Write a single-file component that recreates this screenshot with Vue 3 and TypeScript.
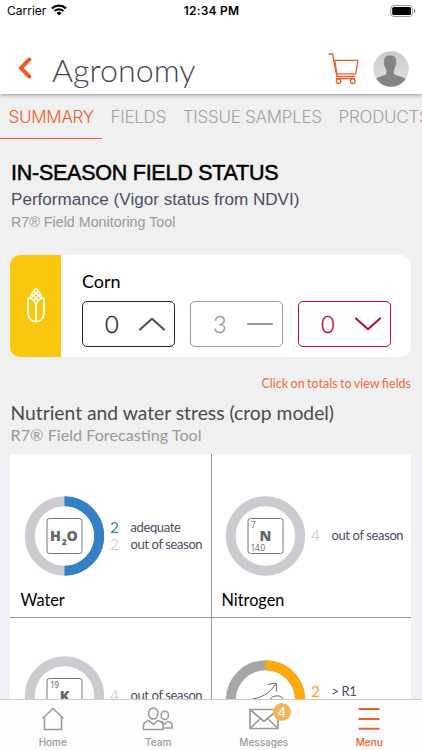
<script setup lang="ts">
interface Tab { label: string; active?: boolean }
interface Legend { count: number; label: string; color: string; light?: boolean }
interface Cell {
  id: string
  name: string
  ring: string
  half?: string
  legend: Legend[]
  symbol?: string
  num?: string
  mass?: string
}

const tabs: Tab[] = [
  { label: 'SUMMARY', active: true },
  { label: 'FIELDS' },
  { label: 'TISSUE SAMPLES' },
  { label: 'PRODUCTS' },
]

const totals = [
  { value: 0, kind: 'up', points: '2,13.5 14,2.8 26,13.5' },
  { value: 3, kind: 'flat', points: '2,8 26,8' },
  { value: 0, kind: 'down', points: '2,2.5 14,13.2 26,2.5' },
]

const cells: Cell[] = [
  {
    id: 'water', name: 'Water', ring: '#cbccd1', half: '#3380c7',
    legend: [
      { count: 2, label: 'adequate', color: '#3380c7' },
      { count: 2, label: 'out of season', color: '#bcbdc2', light: true },
    ],
  },
  {
    id: 'nitrogen', name: 'Nitrogen', ring: '#cbccd1', symbol: 'N', num: '7', mass: '14.0',
    legend: [{ count: 4, label: 'out of season', color: '#b6b7bc', light: true }],
  },
  {
    id: 'potassium', name: 'Potassium', ring: '#cbccd1', symbol: 'K', num: '19', mass: '39.1',
    legend: [{ count: 4, label: 'out of season', color: '#b6b7bc', light: true }],
  },
  {
    id: 'growth', name: 'Growth Stage', ring: '#a6a6a6', half: '#ffa90a',
    legend: [
      { count: 2, label: '> R1', color: '#f5a21b' },
      { count: 2, label: 'out of season', color: '#a6a6a6', light: true },
    ],
  },
]
</script>

<template>
  <div class="screen">
    <header class="header">
      <div class="status">
        <div class="carrier">
          <span>Carrier</span>
          <svg class="wifi" width="16" height="12" viewBox="0 0 16 12" fill="none" stroke="#000">
            <path d="M1 4.4a10.2 10.2 0 0 1 14 0" stroke-width="2.3" />
            <path d="M3.500 7.100a6.600 6.600 0 0 1 9 0" stroke-width="2.100" />
            <path d="M8 11.500 5.500 9a3.600 3.600 0 0 1 5 0z" fill="#000" stroke="none" />
          </svg>
        </div>
        <span class="clock">12:34 PM</span>
        <svg class="battery" width="26" height="12" viewBox="0 0 26 12">
          <rect x="0.8" y="0.6" width="21.600" height="10.800" rx="3" fill="#fff" stroke="#8e8e8e" />
          <rect x="2.200" y="2" width="18.800" height="8" rx="1.600" fill="#000" />
          <path d="M24 4v4c1-.4 1.400-1.200 1.400-2S25 4.400 24 4z" fill="#777" />
        </svg>
      </div>
      <div class="titlebar">
        <svg class="back" width="14" height="22" viewBox="0 0 14 22" fill="none" stroke="#ef5b2b" stroke-width="4">
          <path d="M11.300 2.500 3 11l8.300 8.500" stroke-linecap="round" />
        </svg>
        <h1>Agronomy</h1>
        <svg class="cart" width="32" height="32" viewBox="0 0 32 32" fill="none" stroke="#ee5c30" stroke-width="1.300">
          <path d="M.5 1h4l4.300 22.300H27M5.600 7.300H30L27.600 20.800H8.300M8 25.500h19" />
          <path d="M6.800 7.600 9 22" />
          <circle cx="10.600" cy="28.200" r="2.300" /><circle cx="24.800" cy="28.200" r="2.300" />
        </svg>
        <svg class="avatar" width="36" height="36" viewBox="0 0 36 36">
          <defs>
            <clipPath id="face"><circle cx="18" cy="18" r="17.800" /></clipPath>
            <linearGradient id="shade" x1="0" y1="0" x2="0" y2="1"><stop offset="0" stop-color="#c8c8c8" /><stop offset="1" stop-color="#e4e4e4" /></linearGradient>
          </defs>
          <g clip-path="url(#face)">
            <path d="M0 0h36v36H0z" fill="url(#shade)" />
            <path d="M0 33c2-7.500 7-6.500 13.500-10v-4c-1-1-1.500-2.500-1.700-4-1.300-1-1.300-3.300-.5-4-.8-4.500 1.700-6.500 5.900-6.500 4.300 0 6.500 2.300 5.800 6.500.8.700.5 3-.6 3.800-.2 1.500-.6 3.100-1.500 4.200v4C27 26.500 33.500 25 36 33v4H0z" fill="#848484" />
          </g>
        </svg>
      </div>
    </header>

    <nav class="tabs">
      <a v-for="t in tabs" :key="t.label" :class="{ active: t.active }">{{ t.label }}</a>
    </nav>

    <main>
      <section class="intro">
        <h2>IN-SEASON FIELD STATUS</h2>
        <p class="perf">Performance (Vigor status from NDVI)</p>
        <p class="tool">R7® Field Monitoring Tool</p>
      </section>

      <section class="crop">
        <div class="crop-icon">
          <svg width="20" height="36" viewBox="0 0 20 36" fill="none" stroke="#fff" stroke-width="1.700" stroke-linejoin="round">
            <path d="M2 10v15c0 5 3.500 8.700 8 8.700s8-3.700 8-8.700V10c-5 .5-8 4-8 9v14.500M2 10c5 .5 8 4 8 9" />
            <path d="M5 11C4 9 5 7 6.200 6.500 6 4.500 7 3.500 8.200 3.500 8.300 1.500 9 1 10 1s1.700.5 1.800 2.500c1.200 0 2.200 1 2 3C15 7 16 9 15 11" />
            <path d="M8.200 3.500 14 9M11.800 3.500 6 9M6.200 6.500l6 6M13.800 6.500l-6 6" stroke-width="1.300" />
          </svg>
        </div>
        <div class="crop-body">
          <h3>Corn</h3>
          <div class="totals">
            <button v-for="t in totals" :key="t.kind" :class="['total', t.kind]">
              <span>{{ t.value }}</span>
              <svg width="28" height="16" viewBox="0 0 28 16" fill="none" stroke-width="2.200" stroke-linecap="round" stroke-linejoin="round"><polyline :points="t.points" /></svg>
            </button>
          </div>
        </div>
      </section>

      <p class="hint">Click on totals to view fields</p>
      <section class="model">
        <h2>Nutrient and water stress (crop model)</h2>
        <p>R7® Field Forecasting Tool</p>
      </section>

      <section class="grid">
        <article v-for="c in cells" :key="c.id" :class="['cell', c.id]">
          <div class="reading">
            <svg class="ring" width="80" height="80" viewBox="0 0 80 80">
              <circle cx="40.500" cy="40" r="34.700" fill="none" :stroke="c.ring" stroke-width="10" />
              <path v-if="c.half" d="M40.500 5.300a34.700 34.700 0 0 1 0 69.400" fill="none" :stroke="c.half" stroke-width="10" />
              <rect v-if="c.id !== 'growth'" x="23" y="22.500" width="35" height="35" rx="2.500" fill="#fff" stroke="#777" />
              <g v-if="c.symbol" fill="#666">
                <text x="26" y="31.500" class="tiny">{{ c.num }}</text>
                <text x="40.500" y="44.500" class="symbol" text-anchor="middle">{{ c.symbol }}</text>
                <text x="25.500" y="55" class="tiny">{{ c.mass }}</text>
              </g>
              <g v-if="c.id === 'water'" fill="#666">
                <text x="26" y="44.500" class="symbol">H</text>
                <text x="37.800" y="48.500" class="sub">2</text>
                <text x="42.500" y="44.500" class="symbol">O</text>
              </g>
              <g v-if="c.id === 'growth'" fill="none" stroke="#555" stroke-width=".9">
                <path d="M23 39.800c13-1 22-7 27.500-15.500M42.500 24.500l8.700-1.500.5 8.500" />
                <path d="M45.500 39c1-3 9-5 12.500-.500.500 1 .3 1.500 0 2.500M47 41c3-1.500 6-2 8-1" />
              </g>
            </svg>
            <ul>
              <li v-for="l in c.legend" :key="l.label">
                <b :class="{ light: l.light }" :style="{ color: l.color }">{{ l.count }}</b><span>{{ l.label }}</span>
              </li>
            </ul>
          </div>
          <h4>{{ c.name }}</h4>
        </article>
      </section>
    </main>

    <footer class="bar">
      <a>
        <svg width="24" height="24" viewBox="0 0 24 24" fill="none" stroke="#9a9a9a" stroke-width="1.500"><path d="M1.500 11.500 12 1.500l10.500 10M3.500 10v12.500h17V10" /></svg>
        <span>Home</span>
      </a>
      <a>
        <svg width="32" height="24" viewBox="0 0 32 24" fill="none" stroke="#9a9a9a" stroke-width="1.500">
          <ellipse cx="11.300" cy="6.500" rx="4.700" ry="5.500" />
          <path d="M1.500 22.500v-4c0-2.500 2-4 5.500-5l4.300 4 4.300-4c3.500 1 5.500 2.500 5.500 5v4z" />
          <ellipse cx="22.800" cy="8.300" rx="3.700" ry="4.300" />
          <path d="M19 15.300l1-.8 2.800 2.700 3-2.700c3 .8 4.500 2 4.500 4v2.500H22" />
        </svg>
        <span>Team</span>
      </a>
      <a>
        <svg width="32" height="24" viewBox="0 0 32 24" fill="none" stroke="#9a9a9a" stroke-width="1.700"><path d="M2 2.500h28v19H2zM2 2.500l14 12 14-12M2 21.500l10.500-10M30 21.500l-10.500-10" /></svg>
        <i class="badge">4</i>
        <span>Messages</span>
      </a>
      <a class="on">
        <svg width="24" height="24" viewBox="0 0 24 24" stroke="#ee5c30" stroke-width="2"><path d="M1.500 2h21M1.500 12h21M1.500 21.700h21" /></svg>
        <span>Menu</span>
      </a>
    </footer>
  </div>
</template>

<style>
body { background: #f1f0f7; overflow: hidden; }
</style>

<style scoped>
* { box-sizing: border-box; margin: 0; padding: 0; }
.screen { width: 422px; height: 750px; display: flex; flex-direction: column; overflow: hidden; background: #f1f0f7; font-family: Lato, sans-serif; color: #000; }
.screen svg { display: block; flex: none; }
.header { height: 94px; flex: none; background: #fff; box-shadow: 0 1px 4px rgba(0, 0, 0, .4); z-index: 1; }
.status { height: 22px; padding: 0 6px 0 7px; display: grid; grid-template-columns: 1fr auto 1fr; align-items: center; font: 12px/22px Inter, sans-serif; }
.carrier { display: flex; align-items: center; gap: 5px; }
.wifi { margin-top: -2px; }
.clock { font-weight: 600; font-size: 12px; letter-spacing: .2px; }
.battery { justify-self: end; margin-top: -1px; }
.titlebar { height: 72px; display: flex; align-items: center; padding: 0 13px 0 18px; }
.titlebar .back { margin-top: 20px; }
h1 { font-weight: 300; font-size: 32.200px; line-height: 40px; color: #44455a; margin: 23px 0 0 20px; flex: 1; }
.titlebar .cart { margin-top: 21px; }
.titlebar .avatar { margin: 21px 0 0 13px; }

.tabs { height: 45px; flex: none; display: flex; background: #f0f0f0; font: 300 17px/46px Inter, sans-serif; letter-spacing: -.27px; color: #a2a2a2; white-space: nowrap; }
.tabs a { height: 45px; padding: 0 8.200px 0 8.600px; flex: none; }
.tabs .active { color: #ee5c30; border-bottom: 1px solid #ee5c30; }

main { flex: 1; min-height: 0; overflow: hidden; background: linear-gradient(#f0f0f0 315px, #f1f0f7 315px); }
.intro { padding: 21px 11px 0; font-family: "Liberation Sans", sans-serif; }
.intro h2 { font-weight: 400; font-size: 21.500px; line-height: 26px; white-space: nowrap; -webkit-text-stroke: .5px #000; letter-spacing: -.25px; }
.perf { font-size: 17.100px; line-height: 28px; color: #4c4d64; }
.tool { font-size: 14.300px; line-height: 16px; color: #999; }
.crop { height: 102px; margin: 25px 11px 0 10px; display: flex; background: #fff; border-radius: 10px; overflow: hidden; }
.crop-icon { width: 51px; display: flex; align-items: center; justify-content: center; background: #f9c80e; }
.crop-body { padding: 15px 0 0 21px; }
h3 { font-weight: 400; font-size: 18px; line-height: 22px; }
.totals { display: flex; gap: 15px; margin-top: 9px; }
.total { width: 93px; height: 46px; display: flex; align-items: center; justify-content: space-between; padding: 0 8px 0 22px; border: 1px solid; border-radius: 5px; background: #fff; font: 300 23.500px/44px Lato, sans-serif; -webkit-text-stroke: .35px currentColor; }
.total.up { color: #1c1c20; border-color: #222; }
.total.flat { color: #999; border-color: #999; }
.total.down { color: #c70a32; border-color: #c70a32; }
.total svg { stroke: currentColor; }
.total.up svg { stroke: #515156; }
.hint { margin-top: 19px; padding-right: 11px; text-align: right; font-size: 12.500px; word-spacing: -.7px; line-height: 16px; color: #ee6a42; }
.model { padding: 9px 10.500px 0; height: 62px; white-space: nowrap; }
.model h2 { font-weight: 400; font-size: 19.300px; line-height: 24px; color: #4b4b4b; }
.model p { font-size: 16.200px; line-height: 20px; color: #999; }

.grid { margin: 0 11px 0 10px; display: grid; grid-template-columns: 202px 1fr; grid-template-rows: 164px 164px; background: #fff; }
.cell { padding: 42px 0 0 14px; border-bottom: 1px solid #999; }
.cell:nth-child(even) { padding-left: 13px; }
.cell:nth-child(odd) { border-right: 1px solid #999; }
.potassium { padding-top: 38px; }
.reading { display: flex; align-items: center; }
ul { list-style: none; margin-left: 6px; font-size: 13px; line-height: 17.500px; color: #4c4d64; white-space: nowrap; }
li { display: flex; height: 17.500px; align-items: center; }
li span { letter-spacing: -.38px; }
li b { width: 20.500px; font-weight: 400; font-size: 15.500px; }
li b.light { font-weight: 300; }
h4 { font-weight: 400; font-size: 16.300px; line-height: 20px; margin: 14px 0 0 -3.500px; }
.tiny { font: 8.500px "Open Sans", sans-serif; letter-spacing: -.7px; }
.symbol { font: 800 14.200px "Open Sans", sans-serif; }
.sub { font: 800 8.500px "Open Sans", sans-serif; }

.bar { height: 51px; flex: none; display: grid; grid-template-columns: repeat(4, 1fr); background: #fdfdfd; border-top: 1px solid #ccc; font: 500 10px/14px Inter, sans-serif; color: #9a9a9a; }
.bar a { position: relative; display: flex; flex-direction: column; align-items: center; padding-top: 7px; gap: 4px; }
.bar .on { color: #ee5c30; }
.badge { position: absolute; left: 62px; top: 3px; width: 18px; height: 18px; border-radius: 50%; background: #f1b657; color: #fff; font: 400 13px/18px Inter, sans-serif; text-align: center; }
</style>
